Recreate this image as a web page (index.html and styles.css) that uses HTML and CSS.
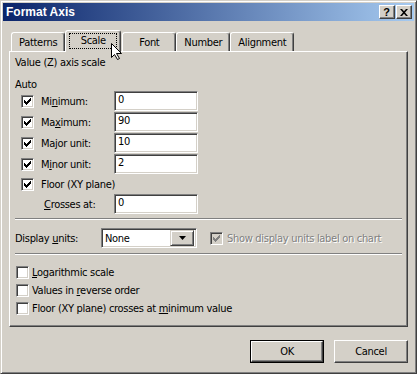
FILE: index.html
```html
<!DOCTYPE html>
<html lang="en">
<head>
    <meta charset="UTF-8">
    <title>Format Axis</title>
    <link rel="stylesheet" href="styles.css">
</head>
<body>
    <svg class="defs" width="0" height="0">
        <symbol id="tick" viewBox="0 0 7 7">
            <path d="M6 0h1v1h-1z M5 1h2v1h-2z M0 2h1v1h-1z M4 2h3v1h-3z M0 3h2v1h-2z M3 3h3v1h-3z M0 4h5v1h-5z M1 5h3v1h-3z M2 6h1v1h-1z"/>
        </symbol>
    </svg>

    <div class="window">
        <!-- Title bar -->
        <div class="titlebar">
            <span class="title">Format Axis</span>
            <div class="caption-buttons">
                <div class="cap-btn help">?</div>
                <div class="cap-btn close">
                    <svg width="8" height="7" viewBox="0 0 8 7"><path d="M0 0h2l2 2.2L6 0h2L5 3.5 8 7H6L4 4.8 2 7H0l3-3.5z"/></svg>
                </div>
            </div>
        </div>

        <!-- Tabs -->
        <div class="tabs">
            <div class="tab">Patterns</div>
            <div class="tab active"><span class="focus">Scale</span></div>
            <div class="tab">Font</div>
            <div class="tab">Number</div>
            <div class="tab">Alignment</div>
        </div>

        <div class="panel">
            <div class="section-title">Value (Z) axis scale</div>
            <div class="auto-label">Auto</div>

            <div class="auto-rows">
                <div class="row">
                    <span class="check"><svg><use href="#tick"/></svg></span>
                    <span class="row-label">Mi<u>n</u>imum:</span>
                    <div class="field">0</div>
                </div>
                <div class="row">
                    <span class="check"><svg><use href="#tick"/></svg></span>
                    <span class="row-label">Ma<u>x</u>imum:</span>
                    <div class="field">90</div>
                </div>
                <div class="row">
                    <span class="check"><svg><use href="#tick"/></svg></span>
                    <span class="row-label">Ma<u>j</u>or unit:</span>
                    <div class="field">10</div>
                </div>
                <div class="row">
                    <span class="check"><svg><use href="#tick"/></svg></span>
                    <span class="row-label">M<u>i</u>nor unit:</span>
                    <div class="field">2</div>
                </div>
                <div class="row floor-row">
                    <span class="check"><svg><use href="#tick"/></svg></span>
                    <span class="row-label">Floor (XY plane)</span>
                </div>
                <div class="row crosses-row">
                    <span class="row-label"><u>C</u>rosses at:</span>
                    <div class="field">0</div>
                </div>
            </div>

            <div class="sep"></div>

            <div class="units-row">
                <span class="units-label">Display <u>u</u>nits:</span>
                <div class="select">
                    <span class="select-value">None</span>
                    <span class="select-btn">
                        <svg width="7" height="4" viewBox="0 0 7 4"><path d="M0 0h7L3.5 4z"/></svg>
                    </span>
                </div>
                <span class="check disabled"><svg><use href="#tick"/></svg></span>
                <span class="disabled-label">Show display units label on chart</span>
            </div>

            <div class="sep sep-second"></div>

            <div class="options">
                <div class="option">
                    <span class="check empty"></span>
                    <span><u>L</u>ogarithmic scale</span>
                </div>
                <div class="option">
                    <span class="check empty"></span>
                    <span>Values in <u>r</u>everse order</span>
                </div>
                <div class="option">
                    <span class="check empty"></span>
                    <span>Floor (XY plane) crosses at <u>m</u>inimum value</span>
                </div>
            </div>
        </div>

        <div class="footer">
            <div class="btn default"><span>OK</span></div>
            <div class="btn">Cancel</div>
        </div>

        <!-- mouse pointer over the Scale tab -->
        <svg class="cursor" width="12" height="18" viewBox="0 0 12 18">
            <path d="M0.5 0.5V14.5L3.5 11.5L6.5 16.5L8.5 15.5L5.5 10.5H10.5Z"/>
        </svg>
    </div>
</body>
</html>
```

FILE: styles.css
```css
* {
    box-sizing: border-box;
}

body {
    margin: 0;
    font-family: "DejaVu Sans Condensed", "Liberation Sans", Arial, sans-serif;
    font-size: 11px;
    letter-spacing: -0.3px;
    color: #000;
    background: #d4d0c8;
}

.defs {
    position: absolute;
}

.window {
    position: relative;
    width: 417px;
    height: 374px;
    padding: 2px;
    background: #d4d0c8;
    border: 1px solid;
    border-color: #d4d0c8 #404040 #404040 #d4d0c8;
    box-shadow: inset 1px 1px #fff, inset -1px -1px #808080;
    display: flex;
    flex-direction: column;
}

/* Title bar */
.titlebar {
    height: 18px;
    padding: 0 2px 0 3px;
    background: linear-gradient(to right, #0a246a, #a6caf0);
    display: flex;
    align-items: center;
    justify-content: space-between;
}

.title {
    color: #fff;
    font-family: "Liberation Sans", Arial, sans-serif;
    font-weight: bold;
    font-size: 12px;
    letter-spacing: 0;
}

.caption-buttons {
    display: flex;
}

.cap-btn {
    width: 16px;
    height: 14px;
    background: #d4d0c8;
    border: 1px solid;
    border-color: #fff #404040 #404040 #fff;
    box-shadow: inset -1px -1px #808080;
    display: flex;
    align-items: center;
    justify-content: center;
}

.help {
    font-family: "Liberation Sans", Arial, sans-serif;
    font-weight: bold;
    font-size: 11px;
    line-height: 12px;
    padding-right: 1px;
}

.close {
    margin-left: 1px;
}

.close svg {
    margin-right: 1px;
}

/* Tabs */
.tabs {
    height: 21px;
    margin: 9px 6px 0;
    padding-left: 2px;
    display: flex;
    align-items: flex-end;
}

.tab {
    height: 19px;
    min-width: 54px;
    padding: 0 7px;
    text-align: center;
    line-height: 19px;
    border: 1px solid;
    border-bottom: none;
    border-color: #fff #404040 transparent #fff;
    border-radius: 3px 3px 0 0;
    box-shadow: inset -1px 0 #808080;
}

.tab.active {
    position: relative;
    z-index: 1;
    height: 22px;
    min-width: 56px;
    margin: 0 1px -1px 0;
    padding: 2px 3px 3px;
    line-height: 14px;
    background: #d4d0c8;
}

.focus {
    display: block;
    height: 16px;
    border: 1px dotted #000;
}

/* Panel */
.panel {
    height: 276px;
    margin: 0 6px;
    padding: 4px 5px 0;
    border: 1px solid;
    border-color: #fff #404040 #404040 #fff;
    box-shadow: inset -1px -1px #808080;
}

.section-title {
    line-height: 13px;
}

.auto-label {
    margin-top: 10px;
    line-height: 12px;
}

.auto-rows {
    display: flex;
    flex-direction: column;
    gap: 1px;
}

.row {
    height: 20px;
    padding-left: 6px;
    display: flex;
    align-items: center;
}

.row .row-label {
    width: 73px;
    margin-left: 7px;
}

.floor-row {
    height: 18px;
}

.floor-row .row-label {
    width: auto;
}

.crosses-row {
    padding-left: 29px;
}

.crosses-row .row-label {
    width: 70px;
    margin-left: 0;
}

.check {
    width: 13px;
    height: 13px;
    flex: none;
    background: #fff;
    border: 1px solid;
    border-color: #808080 #fff #fff #808080;
    box-shadow: inset 1px 1px #404040, inset -1px -1px #d4d0c8;
    display: flex;
    align-items: center;
    justify-content: center;
}

.check svg {
    width: 7px;
    height: 7px;
    fill: #000;
}

.check.disabled {
    background: #d4d0c8;
}

.check.disabled svg {
    fill: #808080;
}

.field {
    width: 84px;
    height: 20px;
    padding: 0 3px;
    line-height: 16px;
    background: #fff;
    border: 1px solid;
    border-color: #808080 #fff #fff #808080;
    box-shadow: inset 1px 1px #404040, inset -1px -1px #d4d0c8;
}

.sep {
    margin-top: 4px;
    height: 2px;
    border-top: 1px solid #808080;
    border-bottom: 1px solid #fff;
}

.sep-second {
    margin-top: 5px;
}

/* Display units */
.units-row {
    height: 20px;
    margin-top: 8px;
    display: flex;
    align-items: center;
}

.units-label {
    width: 86px;
}

.select {
    width: 96px;
    height: 20px;
    padding: 2px 2px 2px 3px;
    background: #fff;
    border: 1px solid;
    border-color: #808080 #fff #fff #808080;
    box-shadow: inset 1px 1px #404040, inset -1px -1px #d4d0c8;
    display: flex;
    align-items: center;
    justify-content: space-between;
}

.select-btn {
    width: 24px;
    height: 16px;
    background: #d4d0c8;
    border: 1px solid;
    border-color: #d4d0c8 #404040 #404040 #d4d0c8;
    box-shadow: inset 1px 1px #fff, inset -1px -1px #808080;
    display: flex;
    align-items: center;
    justify-content: center;
}

.units-row .check {
    margin-left: 13px;
}

.disabled-label {
    margin-left: 4px;
    color: #808080;
    text-shadow: 1px 1px #fff;
}

/* Option checkboxes */
.options {
    margin-top: 8px;
}

.option {
    height: 18px;
    padding-left: 1px;
    display: flex;
    align-items: center;
    gap: 3px;
}

/* Buttons */
.footer {
    margin: 13px 6px 0;
    display: flex;
    justify-content: flex-end;
    gap: 10px;
}

.btn {
    width: 74px;
    height: 23px;
    background: #d4d0c8;
    border: 1px solid;
    border-color: #fff #404040 #404040 #fff;
    box-shadow: inset -1px -1px #808080;
    display: flex;
    align-items: center;
    justify-content: center;
}

.btn.default {
    border: 1px solid #000;
    box-shadow: none;
}

.btn.default span {
    width: 100%;
    height: 100%;
    display: flex;
    align-items: center;
    justify-content: center;
    border: 1px solid;
    border-color: #fff #404040 #404040 #fff;
    box-shadow: inset -1px -1px #808080;
}

.cursor {
    position: absolute;
    left: 110px;
    top: 42px;
    z-index: 2;
}

.cursor path {
    fill: #fff;
    stroke: #000;
}
```
